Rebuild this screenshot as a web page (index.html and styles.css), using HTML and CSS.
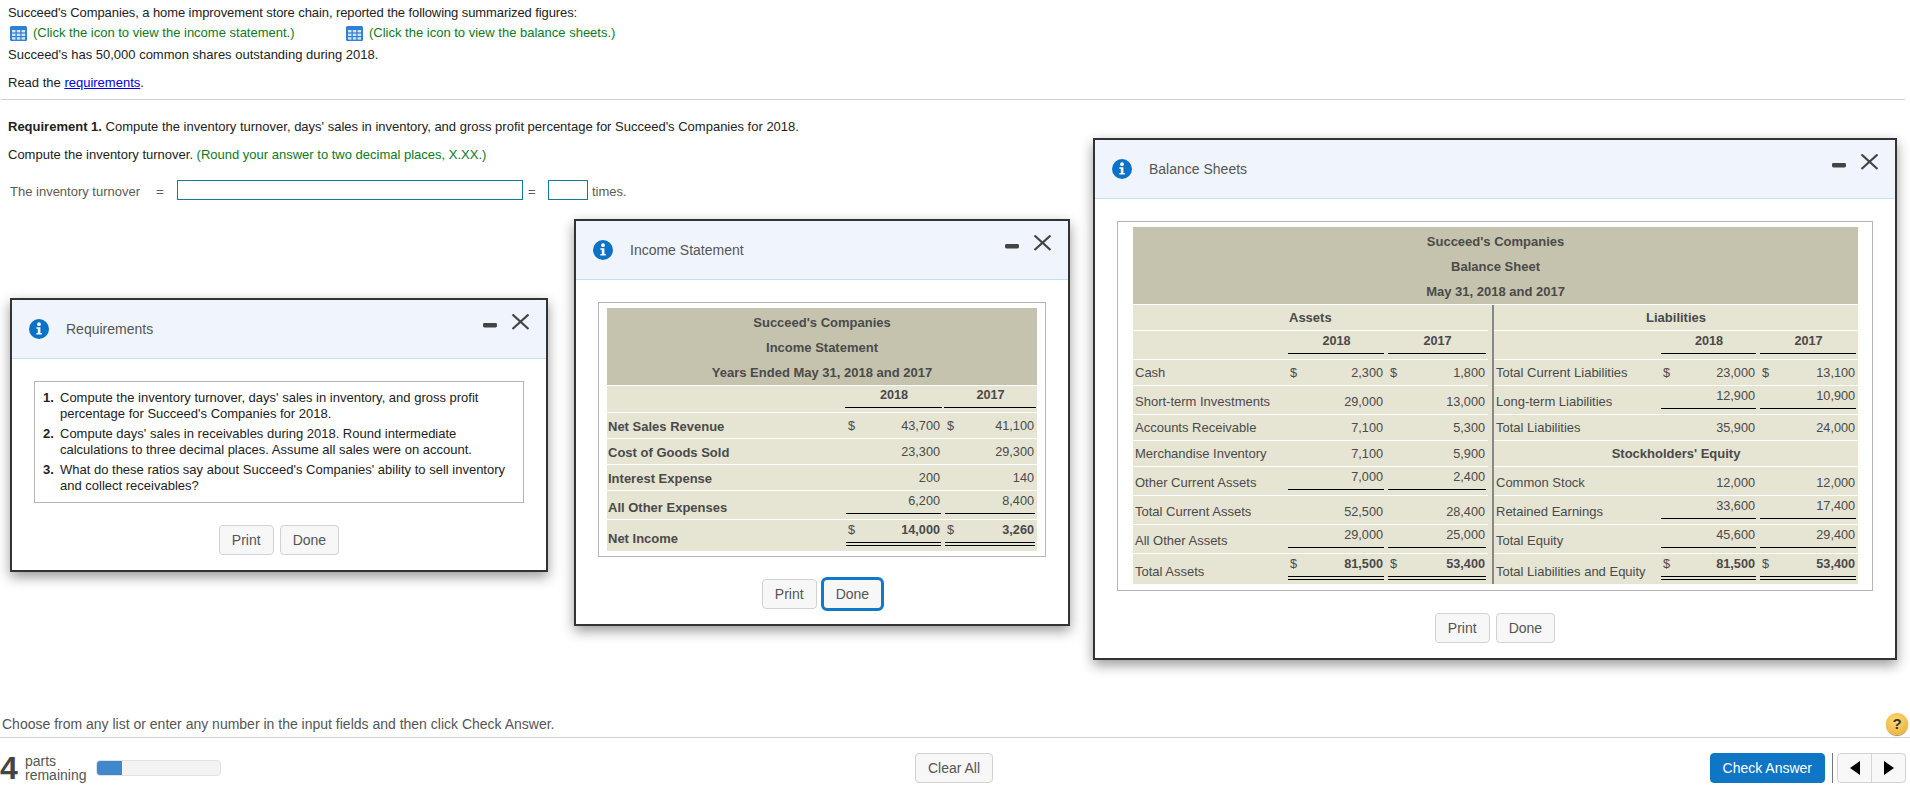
FILE: index.html
```html
<!DOCTYPE html>
<html lang="en">
<head>
<meta charset="utf-8">
<title>Inventory turnover</title>
<link rel="stylesheet" href="styles.css">
</head>
<body>
<div class="page">
  <main class="main">
    <div class="intro">
      <div class="line first">Succeed's Companies, a home improvement store chain, reported the following summarized figures:</div>
      <div class="line links">
        <span class="tlink tlink-a">
          <svg class="grid-ico" viewBox="0 0 17 15"><rect width="17" height="15" rx="1.5" fill="#2f7fd6"/><g fill="#d5e6f8"><rect x="2" y="4" width="3.5" height="2.4"/><rect x="6.8" y="4" width="3.5" height="2.4"/><rect x="11.6" y="4" width="3.5" height="2.4"/><rect x="2" y="7.6" width="3.5" height="2.4"/><rect x="6.8" y="7.6" width="3.5" height="2.4"/><rect x="11.6" y="7.6" width="3.5" height="2.4"/><rect x="2" y="11.2" width="3.5" height="2.4"/><rect x="6.8" y="11.2" width="3.5" height="2.4"/><rect x="11.6" y="11.2" width="3.5" height="2.4"/></g></svg>
          <span class="hint">(Click the icon to view the income statement.)</span>
        </span>
        <span class="tlink">
          <svg class="grid-ico" viewBox="0 0 17 15"><rect width="17" height="15" rx="1.5" fill="#2f7fd6"/><g fill="#d5e6f8"><rect x="2" y="4" width="3.5" height="2.4"/><rect x="6.8" y="4" width="3.5" height="2.4"/><rect x="11.6" y="4" width="3.5" height="2.4"/><rect x="2" y="7.6" width="3.5" height="2.4"/><rect x="6.8" y="7.6" width="3.5" height="2.4"/><rect x="11.6" y="7.6" width="3.5" height="2.4"/><rect x="2" y="11.2" width="3.5" height="2.4"/><rect x="6.8" y="11.2" width="3.5" height="2.4"/><rect x="11.6" y="11.2" width="3.5" height="2.4"/></g></svg>
          <span class="hint">(Click the icon to view the balance sheets.)</span>
        </span>
      </div>
      <div class="line shares">Succeed's has 50,000 common shares outstanding during 2018.</div>
      <div class="line read">Read the <a class="req-link" href="#">requirements</a>.</div>
    </div>
    <hr class="rule">
    <div class="line req"><b>Requirement 1.</b> Compute the inventory turnover, days' sales in inventory, and gross profit percentage for Succeed's Companies for 2018.</div>
    <div class="line compute">Compute the inventory turnover. <span class="hint">(Round your answer to two decimal places, X.XX.)</span></div>
    <div class="formula">
      <span class="f-label">The inventory turnover</span>
      <span class="f-eq">=</span>
      <input class="f-input f-wide" type="text" aria-label="formula">
      <span class="f-eq2">=</span>
      <input class="f-input f-small" type="text" aria-label="answer">
      <span class="f-unit">times.</span>
    </div>
  </main>

  <footer class="foot">
    <div class="prompt">
      <span>Choose from any list or enter any number in the input fields and then click Check Answer.</span>
      <span class="help">?</span>
    </div>
    <div class="actions">
      <div class="parts">
        <span class="parts-n">4</span>
        <span class="parts-t">parts<br>remaining</span>
        <span class="bar"><span class="bar-fill"></span></span>
      </div>
      <button class="btn" type="button">Clear All</button>
      <div class="right">
        <button class="btn btn-primary" type="button">Check Answer</button>
        <span class="sep"></span>
        <span class="nav">
          <span class="nav-cell"><svg class="tri" viewBox="0 0 10 14"><path d="M10 0V14L0 7Z"/></svg></span>
          <span class="nav-cell"><svg class="tri" viewBox="0 0 10 14"><path d="M0 0V14L10 7Z"/></svg></span>
        </span>
      </div>
    </div>
  </footer>
</div>

<section class="win win-req">
  <header class="win-head">
    <svg class="info" viewBox="0 0 20 20"><circle cx="10" cy="10" r="10" fill="#0b72c6"/><circle cx="10" cy="5.2" r="1.9" fill="#fff"/><path d="M7.4 8.3H11.4V14.1H12.8V15.6H7.4V14.1H8.8V9.8H7.4Z" fill="#fff"/></svg>
    <span class="win-title">Requirements</span>
    <svg class="ctrl" viewBox="0 0 46 16"><rect y="9" width="14" height="4.4" rx="1.4" fill="#444"/><path d="M29.5 .5L45.5 15M45.5 .5L29.5 15" stroke="#444" stroke-width="2.2" fill="none"/></svg>
  </header>
  <div class="win-body">
    <ol class="reqs">
      <li><span class="num">1.</span><span>Compute the inventory turnover, days' sales in inventory, and gross profit percentage for Succeed's Companies for 2018.</span></li>
      <li><span class="num">2.</span><span>Compute days' sales in receivables during 2018. Round intermediate calculations to three decimal places. Assume all sales were on account.</span></li>
      <li><span class="num">3.</span><span>What do these ratios say about Succeed's Companies' ability to sell inventory and collect receivables?</span></li>
    </ol>
    <div class="win-btns"><button class="btn" type="button">Print</button><button class="btn" type="button">Done</button></div>
  </div>
</section>

<section class="win win-inc">
  <header class="win-head">
    <svg class="info" viewBox="0 0 20 20"><circle cx="10" cy="10" r="10" fill="#0b72c6"/><circle cx="10" cy="5.2" r="1.9" fill="#fff"/><path d="M7.4 8.3H11.4V14.1H12.8V15.6H7.4V14.1H8.8V9.8H7.4Z" fill="#fff"/></svg>
    <span class="win-title">Income Statement</span>
    <svg class="ctrl" viewBox="0 0 46 16"><rect y="9" width="14" height="4.4" rx="1.4" fill="#444"/><path d="M29.5 .5L45.5 15M45.5 .5L29.5 15" stroke="#444" stroke-width="2.2" fill="none"/></svg>
  </header>
  <div class="win-body">
    <div class="sheet sheet-inc">
      <table class="fin income">
        <colgroup><col class="ci-l"><col class="ci-a"><col class="ci-b"></colgroup>
        <tr class="h76"><td class="title" colspan="3">Succeed's Companies<br>Income Statement<br>Years Ended May 31, 2018 and 2017</td></tr>
        <tr class="h27"><td></td><td class="t"><div class="v va u yr">2018</div></td><td class="t"><div class="v vb u yr">2017</div></td></tr>
        <tr class="h26"><td class="lab">Net Sales Revenue</td><td><div class="v va"><span>$</span><span>43,700</span></div></td><td><div class="v vb"><span>$</span><span>41,100</span></div></td></tr>
        <tr class="h26"><td class="lab">Cost of Goods Sold</td><td><div class="v va"><span>23,300</span></div></td><td><div class="v vb"><span>29,300</span></div></td></tr>
        <tr class="h26"><td class="lab">Interest Expense</td><td><div class="v va"><span>200</span></div></td><td><div class="v vb"><span>140</span></div></td></tr>
        <tr class="h29"><td class="lab">All Other Expenses</td><td class="t"><div class="v va u"><span>6,200</span></div></td><td class="t"><div class="v vb u"><span>8,400</span></div></td></tr>
        <tr class="h31 last"><td class="lab">Net Income</td><td class="t"><div class="v va dbl"><span>$</span><span class="tot">14,000</span></div></td><td class="t"><div class="v vb dbl"><span>$</span><span class="tot">3,260</span></div></td></tr>
      </table>
    </div>
    <div class="win-btns"><button class="btn" type="button">Print</button><button class="btn btn-focus" type="button">Done</button></div>
  </div>
</section>

<section class="win win-bal">
  <header class="win-head">
    <svg class="info" viewBox="0 0 20 20"><circle cx="10" cy="10" r="10" fill="#0b72c6"/><circle cx="10" cy="5.2" r="1.9" fill="#fff"/><path d="M7.4 8.3H11.4V14.1H12.8V15.6H7.4V14.1H8.8V9.8H7.4Z" fill="#fff"/></svg>
    <span class="win-title">Balance Sheets</span>
    <svg class="ctrl" viewBox="0 0 46 16"><rect y="9" width="14" height="4.4" rx="1.4" fill="#444"/><path d="M29.5 .5L45.5 15M45.5 .5L29.5 15" stroke="#444" stroke-width="2.2" fill="none"/></svg>
  </header>
  <div class="win-body">
    <div class="sheet sheet-bal">
      <table class="fin balance">
        <colgroup><col class="cb-l"><col class="cb-a"><col class="cb-b"><col class="cb-d"><col class="cb-r"><col class="cb-f"><col class="cb-g"></colgroup>
        <tr class="h76"><td class="title" colspan="7">Succeed's Companies<br>Balance Sheet<br>May 31, 2018 and 2017</td></tr>
        <tr class="h26"><td></td><td class="head" colspan="2">Assets</td><td class="div"></td><td class="head center" colspan="3">Liabilities</td></tr>
        <tr class="h29"><td></td><td class="t"><div class="v va u yr">2018</div></td><td class="t"><div class="v vb u yr">2017</div></td><td class="div"></td><td></td><td class="t"><div class="v va u yr">2018</div></td><td class="t"><div class="v vb u yr">2017</div></td></tr>
        <tr class="h26"><td class="lab">Cash</td><td><div class="v va"><span>$</span><span>2,300</span></div></td><td><div class="v vb"><span>$</span><span>1,800</span></div></td><td class="div"></td><td class="lab">Total Current Liabilities</td><td><div class="v va"><span>$</span><span>23,000</span></div></td><td><div class="v vb"><span>$</span><span>13,100</span></div></td></tr>
        <tr class="h29"><td class="lab">Short-term Investments</td><td><div class="v va"><span>29,000</span></div></td><td><div class="v vb"><span>13,000</span></div></td><td class="div"></td><td class="lab">Long-term Liabilities</td><td class="t"><div class="v va u"><span>12,900</span></div></td><td class="t"><div class="v vb u"><span>10,900</span></div></td></tr>
        <tr class="h26"><td class="lab">Accounts Receivable</td><td><div class="v va"><span>7,100</span></div></td><td><div class="v vb"><span>5,300</span></div></td><td class="div"></td><td class="lab">Total Liabilities</td><td><div class="v va"><span>35,900</span></div></td><td><div class="v vb"><span>24,000</span></div></td></tr>
        <tr class="h26"><td class="lab">Merchandise Inventory</td><td><div class="v va"><span>7,100</span></div></td><td><div class="v vb"><span>5,900</span></div></td><td class="div"></td><td class="head center" colspan="3">Stockholders' Equity</td></tr>
        <tr class="h29"><td class="lab">Other Current Assets</td><td class="t"><div class="v va u"><span>7,000</span></div></td><td class="t"><div class="v vb u"><span>2,400</span></div></td><td class="div"></td><td class="lab">Common Stock</td><td><div class="v va"><span>12,000</span></div></td><td><div class="v vb"><span>12,000</span></div></td></tr>
        <tr class="h29"><td class="lab">Total Current Assets</td><td><div class="v va"><span>52,500</span></div></td><td><div class="v vb"><span>28,400</span></div></td><td class="div"></td><td class="lab">Retained Earnings</td><td class="t"><div class="v va u"><span>33,600</span></div></td><td class="t"><div class="v vb u"><span>17,400</span></div></td></tr>
        <tr class="h29"><td class="lab">All Other Assets</td><td class="t"><div class="v va u"><span>29,000</span></div></td><td class="t"><div class="v vb u"><span>25,000</span></div></td><td class="div"></td><td class="lab">Total Equity</td><td class="t"><div class="v va u"><span>45,600</span></div></td><td class="t"><div class="v vb u"><span>29,400</span></div></td></tr>
        <tr class="h30 last"><td class="lab">Total Assets</td><td class="t"><div class="v va dbl"><span>$</span><span class="tot">81,500</span></div></td><td class="t"><div class="v vb dbl"><span>$</span><span class="tot">53,400</span></div></td><td class="div"></td><td class="lab">Total Liabilities and Equity</td><td class="t"><div class="v va dbl"><span>$</span><span class="tot">81,500</span></div></td><td class="t"><div class="v vb dbl"><span>$</span><span class="tot">53,400</span></div></td></tr>
      </table>
    </div>
    <div class="win-btns"><button class="btn" type="button">Print</button><button class="btn" type="button">Done</button></div>
  </div>
</section>
</body>
</html>
```
FILE: styles.css
```css
* { box-sizing: border-box; }
html, body { margin: 0; padding: 0; }
body {
  font-family: "Liberation Sans", Arial, sans-serif;
  font-size: 13px;
  color: #222;
  background: #fff;
  overflow: hidden;
}
.page { height: 793px; display: flex; flex-direction: column; }
.main { flex: 1; }

/* intro text */
.intro { padding-top: 3px; }
.line { line-height: 20px; padding-left: 8px; }
.first { letter-spacing: -0.09px; }
.links { display: flex; }
.shares { margin-top: 2px; }
.read { margin-top: 8px; }
.tlink { display: flex; align-items: center; }
.tlink-a { width: 338px; padding-left: 2px; }
.grid-ico { width: 17px; height: 15px; margin-right: 6px; }
.hint { color: #0b7a1e; }
.req-link { color: #0000e6; }
.rule { margin: 6px 5px 0 1px; height: 1px; border: 0; background: #d0d0d8; }
.req { margin-top: 17px; }
.compute { margin-top: 8px; }
.formula { display: flex; align-items: center; height: 20px; margin-top: 15px; padding-left: 10px; color: #5d5b50; font-size: 13px; }
.f-label { width: 146px; padding-top: 3px; }
.f-eq { width: 21px; padding-top: 2px; }
.f-eq2 { width: 25px; padding: 2px 0 0 5px; }
.f-input { height: 20px; border: 1px solid #127a9e; background: #fff; padding: 0; margin: 0; }
.f-wide { width: 346px; }
.f-small { width: 40px; }
.f-unit { margin-left: 4px; padding-top: 3px; }

/* footer */
.foot { height: 80px; }
.prompt { display: flex; justify-content: space-between; align-items: center; height: 25px; padding: 0 2px 3px; border-bottom: 1px solid #ccd2de; font-size: 14px; color: #555; }
.help { width: 22px; height: 22px; border-radius: 50%; background: radial-gradient(circle at 45% 35%, #fbdb7a, #eeb033 85%); box-shadow: 0 1px 1px #9a8a5a; color: #333; font-weight: bold; font-size: 15px; line-height: 22px; text-align: center; }
.actions { display: grid; grid-template-columns: 1fr auto 1fr; align-items: center; padding: 15px 2px 0 0; }
.parts { display: flex; align-items: center; color: #555; }
.parts-n { width: 25px; font-size: 32px; font-weight: bold; line-height: 30px; color: #444; }
.parts-t { width: 71px; font-size: 14px; line-height: 14px; }
.bar { width: 125px; height: 16px; border: 1px solid #e2e2e2; border-radius: 4px; background: #f3f3f3; overflow: hidden; display: block; }
.bar-fill { display: block; width: 25px; height: 100%; background: #3f88cc; }
.right { display: flex; justify-content: flex-end; align-items: center; padding-right: 2px; }
.sep { width: 1px; height: 30px; margin: 0 4px 0 7px; background: #777; }
.nav { display: flex; width: 69px; height: 30px; border: 1px solid #d4d4d4; border-radius: 4px; background: #f8f8f8; }
.nav-cell { flex: 1; display: flex; align-items: center; justify-content: center; }
.nav-cell + .nav-cell { border-left: 1px solid #d4d4d4; }
.tri { width: 10px; height: 14px; fill: #000; }

/* buttons */
.btn { height: 30px; padding: 0 12px; border: 1px solid #d2d2d2; border-radius: 4px; background: #f7f7f7; color: #555; font-family: "Liberation Sans", Arial, sans-serif; font-size: 14px; margin: 0; }
.btn-primary { background: #0f75c5; border-color: #0f75c5; color: #fff; }
.btn-focus { outline: 3px solid #1279c9; outline-offset: -1px; }

/* windows on the desktop */
.win { position: absolute; border: 2px solid #333; background: #fff; box-shadow: 0 5px 12px rgba(0,0,0,.4); }
.win-req { left: 10px; top: 298px; width: 538px; }
.win-inc { left: 574px; top: 219px; width: 496px; }
.win-bal { left: 1093px; top: 138px; width: 804px; }
.win-head { display: flex; height: 59px; padding: 19px 17px 0 17px; background: #f0f5fd; border-bottom: 1px solid #c5e0f5; }
.info { width: 20px; height: 20px; flex: none; }
.win-title { margin-left: 17px; font-size: 14px; line-height: 20px; color: #555; }
.ctrl { width: 46px; height: 16px; margin: -5px 0 0 auto; }
.win-body { padding: 22px 22px 15px; }
.win-btns { display: flex; justify-content: center; gap: 6px; margin-top: 22px; }

.reqs { margin: 0; padding: 8px 9px 8px 8px; list-style: none; border: 1px solid #b5b5b5; font-size: 13px; line-height: 16px; color: #222; }
.reqs li { display: flex; }
.reqs li + li { margin-top: 4px; }
.num { flex: none; width: 17px; font-weight: bold; }

/* statements */
.sheet { border: 1px solid #b5b5b5; }
.sheet-inc { padding: 5px 8px 5px; }
.sheet-bal { padding: 5px 14px 6px 15px; }
.fin { table-layout: fixed; border-collapse: separate; border-spacing: 0; font-size: 13px; color: #4a4a4a; background: #e6e4d3; }
.income { width: 430px; }
.balance { width: 725px; }
.ci-l { width: 239px; } .ci-a { width: 97px; } .ci-b { width: 94px; }
.cb-l { width: 155px; } .cb-a { width: 98px; } .cb-b { width: 102px; } .cb-d { width: 6px; }
.cb-r { width: 167px; } .cb-f { width: 97px; } .cb-g { width: 100px; }
.fin td { padding: 0; vertical-align: bottom; border-bottom: 1px solid #fff; }
.fin .last td { border-bottom: 0; }
.fin td.t { vertical-align: top; }
.h76 td { height: 76px; } .h26 td { height: 26px; } .h27 td { height: 27px; }
.h29 td { height: 29px; } .h30 td { height: 30px; } .h31 td { height: 31px; }
.fin td.title { background: #c5c3ad; text-align: center; font-weight: bold; line-height: 25px; vertical-align: top; padding-top: 2px; }
.fin td.lab { line-height: 14px; padding: 0 0 5px 2px; white-space: nowrap; }
.income td.lab { font-weight: bold; padding: 0 0 4px 1px; }
.income .last td.lab { padding-bottom: 5px; }
.fin td.head { font-weight: bold; line-height: 14px; padding: 0 0 5px 1px; }
.fin td.center { text-align: center; padding-left: 0; }
.fin td.div { border-bottom: 0; border-right: 2px solid #888; }
.v { display: flex; justify-content: space-between; font-size: 12.7px; line-height: 14px; padding: 0 1px 5px 2px; }
.v span:last-child { margin-left: auto; }
.va { margin: 0 2px 0 0; }
.vb { margin: 0 2px 0 2px; }
.u { padding-top: 3px; border-bottom: 1px solid #000; }
.dbl { padding-top: 3px; border-bottom: 4px double #000; }
.yr { display: block; text-align: center; font-weight: bold; }
.income .yr { padding-top: 2px; }
.income .va.yr { margin: 0 1px 0 -1px; }
.income .vb.yr { margin: 0 1px; }
.tot { font-weight: bold; }
```
